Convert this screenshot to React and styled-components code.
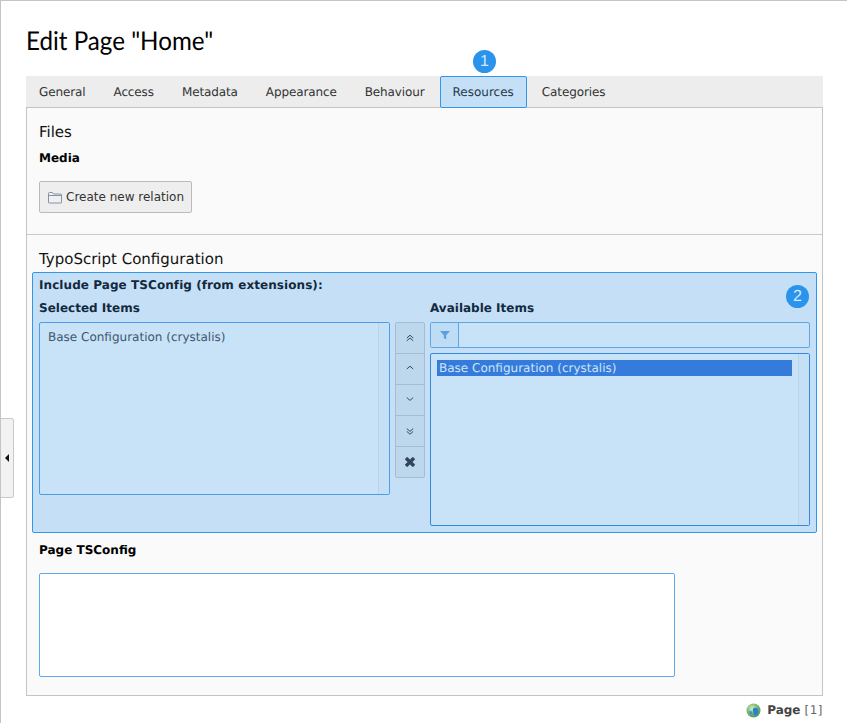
import React from "react";
import styled, { createGlobalStyle } from "styled-components";

const GlobalStyle = createGlobalStyle`
  html, body {
    margin: 0;
    padding: 0;
    background: #fff;
  }
  body {
    font-family: "DejaVu Sans", Verdana, sans-serif;
    font-size: 12px;
    color: #333;
    text-rendering: geometricPrecision;
  }
  * {
    box-sizing: border-box;
  }
`;

const Page = styled.div`
  position: relative;
  width: 847px;
  height: 723px;
  overflow: hidden;
  border-top: 1px solid #c4c4c4;
  border-left: 1px solid #c4c4c4;
  padding: 0 24px 0 25px;
`;

const Title = styled.h1`
  margin: 0;
  height: 75px;
  padding-top: 22px;
  font-family: "Lato", sans-serif;
  font-size: 26px;
  line-height: 34px;
  font-weight: 400;
  color: #000;
  transform: scaleX(0.93);
  transform-origin: left center;
`;

const TabBar = styled.div`
  display: flex;
  height: 31px;
  background: #ededed;
  position: relative;
`;

const Tab = styled.div`
  height: 32px;
  display: flex;
  align-items: center;
  padding: 0 12px;
  margin-right: 2px;
  border: 1px solid ${(p) => (p.$active ? "#2f97ee" : "transparent")};
  border-radius: ${(p) => (p.$active ? "2px" : "0")};
  background: ${(p) => (p.$active ? "#c5e0f6" : "transparent")};
  color: ${(p) => (p.$active ? "#26394d" : "#333")};
  letter-spacing: ${(p) => (p.$active ? "0" : "-0.115px")};
  position: relative;
  z-index: 1;
`;

const Panel = styled.div`
  border: 1px solid #c4c4c4;
  background: #fafafa;
  height: 589px;
`;

const FilesSection = styled.section`
  height: 127px;
  padding: 14px 12px 0;
  border-bottom: 1px solid #c9c9c9;
`;

const SectionTitle = styled.h2`
  margin: 0;
  font-size: 15px;
  line-height: 21px;
  font-weight: 400;
  color: #111;
`;

const FieldLabel = styled.div`
  font-weight: 700;
  line-height: 16px;
  color: ${(p) => (p.$dark ? "#13293f" : "#000")};
`;

const MediaLabel = styled(FieldLabel)`
  margin-top: 7px;
`;

const CreateButton = styled.button`
  display: flex;
  align-items: center;
  gap: 4px;
  margin-top: 15px;
  height: 32px;
  width: 153px;
  padding: 0 0 0 8px;
  border: 1px solid #bbb;
  border-radius: 2px;
  background: #eee;
  color: #333;
  font: inherit;
`;

const ConfigSection = styled.section`
  padding: 14px 5px 0;
`;

const ConfigTitle = styled(SectionTitle)`
  padding-left: 7px;
`;

const Highlight = styled.div`
  position: relative;
  margin-top: 2px;
  height: 261px;
  padding: 4px 6px 0;
  border: 1px solid #2f97ee;
  border-radius: 2px;
  background: #c5e0f6;
`;

const IncludeLabel = styled(FieldLabel)`
  letter-spacing: 0.07px;
`;

const Columns = styled.div`
  display: flex;
  margin-top: 7px;
`;

const SelectedColumn = styled.div`
  width: 351px;
`;

const AvailableColumn = styled.div`
  width: 380px;
  margin-left: 5px;
`;

const ColumnLabel = styled(FieldLabel)`
  margin-bottom: 6px;
`;

const ListBox = styled.div`
  display: flex;
  height: 173px;
  border: 1px solid ${(p) => (p.$strong ? "#3489df" : "#4d9eea")};
  border-radius: 2px;
  background: #c8e2f8;
`;

const ListContent = styled.div`
  flex: 1;
  padding: ${(p) => p.$padding};
  color: #3f566e;
`;

const Gutter = styled.div`
  width: 11px;
  border-left: 1px solid #b9d4ec;
  background: #c5dff5;
`;

const SelectedOption = styled.div`
  height: 16px;
  line-height: 16px;
  padding-left: 2px;
  background: #347bdb;
  color: #cfe4f8;
`;

const MoveButtons = styled.div`
  display: flex;
  flex-direction: column;
  width: 30px;
  height: 156px;
  margin: 22px 0 0 5px;
  border: 1px solid #a3bdd4;
  border-radius: 2px;
  background: #bdd7ed;
`;

const MoveButton = styled.div`
  flex: 1;
  display: flex;
  align-items: center;
  justify-content: center;
  border-top: ${(p) => (p.$first ? "none" : "1px solid #a3bdd4")};
  color: #4a5f73;
`;

const FilterRow = styled.div`
  display: flex;
  height: 26px;
  margin-bottom: 5px;
  border: 1px solid #5ea6e8;
  border-radius: 2px;
  background: #c8e2f8;
`;

const FilterIcon = styled.div`
  width: 28px;
  display: flex;
  align-items: center;
  justify-content: center;
  border-right: 1px solid #5ea6e8;
  background: #bfdcf5;
`;

const Badge = styled.div`
  position: absolute;
  width: 23px;
  height: 23px;
  border-radius: 50%;
  background: #2a93ec;
  color: #d4e9fb;
  font-family: "Liberation Sans", Arial, sans-serif;
  font-size: 16px;
  line-height: 23px;
  text-align: center;
  z-index: 2;
`;

const TabBadge = styled(Badge)`
  left: 447px;
  top: -26px;
`;

const BlockBadge = styled(Badge)`
  right: 7px;
  top: 12px;
`;

const TsField = styled.div`
  padding: 9px 7px 0;
`;

const TsTextarea = styled.div`
  width: 636px;
  height: 104px;
  margin-top: 15px;
  border: 1px solid #60a8ec;
  border-radius: 2px;
  background: #fff;
`;

const Footer = styled.div`
  display: flex;
  justify-content: flex-end;
  align-items: center;
  height: 27px;
  padding-top: 1px;
  color: #444;
`;

const FooterName = styled.span`
  font-weight: 700;
  margin: 0 4px 0 6px;
`;

const FooterId = styled.span`
  color: #666;
  letter-spacing: 0.5px;
`;

const SideHandle = styled.div`
  position: absolute;
  left: -1px;
  top: 417px;
  width: 14px;
  height: 80px;
  display: flex;
  align-items: center;
  padding-left: 5px;
  background: #f2f2f2;
  border: 1px solid #c9c9c9;
  border-left: none;
  border-radius: 0 3px 3px 0;
`;

const Chevrons = ({ up, double }) => {
  const d = up ? "M1 6 5 2.500 9 6" : "M1 3 5 6.500 9 3";
  const d2 = up ? "M1 9.500 5 6 9 9.500" : "M1 6.500 5 10 9 6.500";
  return (
    <svg width="8" height="10" viewBox="0 0 10 12" fill="none" stroke="#2f4458" strokeWidth="1.200">
      <path d={d} />
      {double && <path d={d2} />}
    </svg>
  );
};

const CloseIcon = () => (
  <svg width="10" height="10" viewBox="0 0 10 10" stroke="#32465a" strokeWidth="3.400">
    <path d="M1 1 9 9M9 1 1 9" />
  </svg>
);

const FunnelIcon = () => (
  <svg width="10" height="10" viewBox="0 0 10 10" fill="#5a9fe0">
    <path d="M0 1h10L6.200 5.200V9.500L3.800 8V5.200z" />
  </svg>
);

const FolderIcon = () => (
  <svg width="14" height="13" viewBox="0 0 14 13" fill="#eef0f6" stroke="#7d8794" strokeWidth="0.9">
    <path d="M.5 11.500V2.500q0-1 1-1h3l1 1.500h7q1 0 1 1v7.500q0 .5-.5.5H1q-.5 0-.5-.5z" />
    <path d="M.5 4.500h13" fill="none" />
  </svg>
);

const GlobeIcon = () => (
  <svg width="15" height="15" viewBox="0 0 15 15">
    <defs>
      <radialGradient id="globe" cx="0.4" cy="0.35" r="0.7">
        <stop offset="0" stopColor="#d5e8c8" />
        <stop offset="0.6" stopColor="#72b568" />
        <stop offset="1" stopColor="#4a9a50" />
      </radialGradient>
    </defs>
    <circle cx="7.500" cy="7.500" r="7" fill="url(#globe)" />
    <path d="M7 5.500q3-1.500 5 .5l.5 3.500q-1 3-3.500 3.500Q6.500 10 7 5.500z" fill="#2f7fd0" />
    <path d="M3 8.500q2-1 3 .5l1 3q-3 0-4-3.500z" fill="#3f8fd8" />
  </svg>
);

const TriangleIcon = () => (
  <svg width="4" height="8" viewBox="0 0 4 8" fill="#111">
    <path d="M4 0v8L0 4z" />
  </svg>
);

const tabs = ["General", "Access", "Metadata", "Appearance", "Behaviour", "Resources", "Categories"];

const App = () => (
  <Page>
    <GlobalStyle />
    <Title>Edit Page "Home"</Title>
    <TabBar>
      <TabBadge>1</TabBadge>
      {tabs.map((t) => (
        <Tab key={t} $active={t === "Resources"}>
          {t}
        </Tab>
      ))}
    </TabBar>
    <Panel>
      <FilesSection>
        <SectionTitle>Files</SectionTitle>
        <MediaLabel>Media</MediaLabel>
        <CreateButton>
          <FolderIcon />
          Create new relation
        </CreateButton>
      </FilesSection>
      <ConfigSection>
        <ConfigTitle>TypoScript Configuration</ConfigTitle>
        <Highlight>
          <BlockBadge>2</BlockBadge>
          <IncludeLabel $dark>Include Page TSConfig (from extensions):</IncludeLabel>
          <Columns>
            <SelectedColumn>
              <ColumnLabel $dark>Selected Items</ColumnLabel>
              <ListBox>
                <ListContent $padding="7px 8px">Base Configuration (crystalis)</ListContent>
                <Gutter />
              </ListBox>
            </SelectedColumn>
            <MoveButtons>
              <MoveButton $first><Chevrons up double /></MoveButton>
              <MoveButton><Chevrons up /></MoveButton>
              <MoveButton><Chevrons /></MoveButton>
              <MoveButton><Chevrons double /></MoveButton>
              <MoveButton><CloseIcon /></MoveButton>
            </MoveButtons>
            <AvailableColumn>
              <ColumnLabel $dark>Available Items</ColumnLabel>
              <FilterRow>
                <FilterIcon><FunnelIcon /></FilterIcon>
              </FilterRow>
              <ListBox $strong>
                <ListContent $padding="6px 6px">
                  <SelectedOption>Base Configuration (crystalis)</SelectedOption>
                </ListContent>
                <Gutter />
              </ListBox>
            </AvailableColumn>
          </Columns>
        </Highlight>
        <TsField>
          <FieldLabel>Page TSConfig</FieldLabel>
          <TsTextarea />
        </TsField>
      </ConfigSection>
    </Panel>
    <Footer>
      <GlobeIcon />
      <FooterName>Page</FooterName>
      <FooterId>[1]</FooterId>
    </Footer>
    <SideHandle>
      <TriangleIcon />
    </SideHandle>
  </Page>
);

export default App;
